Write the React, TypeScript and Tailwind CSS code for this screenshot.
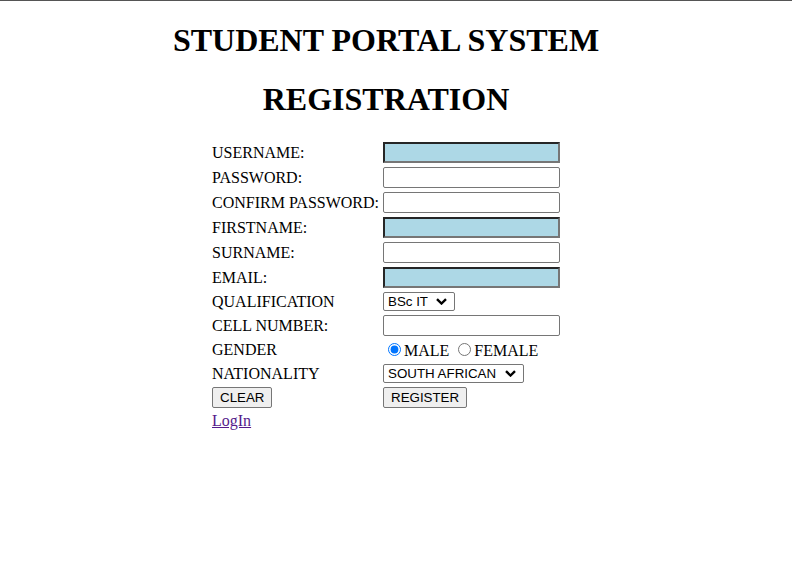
import React from 'react';

const serif = "font-['Liberation_Serif','Times_New_Roman',serif]";
const sans = "font-['Liberation_Sans',Arial,sans-serif]";

const Field: React.FC<{ highlight?: boolean; type?: string }> = ({ highlight, type = 'text' }) => (
  <input
    type={type}
    className={
      highlight
        ? `w-[177px] h-[21px] px-[1px] bg-[#add8e6] border-2 border-t-[#262626] border-l-[#262626] border-r-[#767676] border-b-[#767676] outline-none ${sans} text-[13.33px]`
        : `w-[177px] h-[21px] px-[2px] bg-white border border-[#767676] rounded-[2px] outline-none ${sans} text-[13.33px]`
    }
  />
);

const Select: React.FC<{ value: string }> = ({ value }) => (
  <div className="relative inline-flex">
    <select
      defaultValue={value}
      className={`appearance-none h-[19px] pl-[4px] pr-[26px] bg-white border border-[#767676] rounded-[2px] ${sans} text-[13.33px] leading-[17px] text-black outline-none`}
    >
      <option>{value}</option>
    </select>
    {/* native-looking chevron */}
    <svg
      className="absolute right-[8px] top-[6px] pointer-events-none"
      width="11"
      height="7"
      viewBox="0 0 11 7"
      fill="none"
    >
      <path d="M1 1.2 L5.5 5.5 L10 1.2" stroke="#000" strokeWidth="2.4" />
    </svg>
  </div>
);

const Button: React.FC<{ children: React.ReactNode }> = ({ children }) => (
  <button
    type="button"
    className={`h-[21px] px-[7px] bg-[#efefef] border border-[#767676] rounded-[2px] ${sans} text-[13.33px] leading-[15px] text-black`}
  >
    {children}
  </button>
);

export default function App() {
  return (
    <div className={`min-h-screen bg-white border-t border-[#555] text-black leading-[normal] ${serif}`}>
      <div className="w-[772px] flex flex-col items-center">
        <h1 className="mt-[21.44px] text-[32px] font-bold leading-[normal]">STUDENT PORTAL SYSTEM</h1>
        <h1 className="mt-[21.44px] text-[32px] font-bold leading-[normal]">REGISTRATION</h1>

        <form className="mt-[24.44px] grid grid-cols-[171px_177px] gap-y-[4px] items-center justify-items-start text-[16px]">
          <span>USERNAME:</span>
          <Field highlight />
          <span>PASSWORD:</span>
          <Field type="password" />
          <span>CONFIRM PASSWORD:</span>
          <Field type="password" />
          <span>FIRSTNAME:</span>
          <Field highlight />
          <span>SURNAME:</span>
          <Field />
          <span>EMAIL:</span>
          <Field highlight />
          <span>QUALIFICATION</span>
          <Select value="BSc IT" />
          <span>CELL NUMBER:</span>
          <Field />
          <span>GENDER</span>
          <div className="h-[20px] whitespace-nowrap">
            <input type="radio" name="gender" defaultChecked className="ml-[5px] mr-[3px] mt-[3px]" />
            MALE{' '}
            <input type="radio" name="gender" className="ml-[5px] mr-[3px] mt-[3px]" />
            FEMALE
          </div>
          <span>NATIONALITY</span>
          <Select value="SOUTH AFRICAN" />
          <Button>CLEAR</Button>
          <Button>REGISTER</Button>
          <a href="#" className="text-[#551a8b] underline">LogIn</a>
        </form>
      </div>
    </div>
  );
}
